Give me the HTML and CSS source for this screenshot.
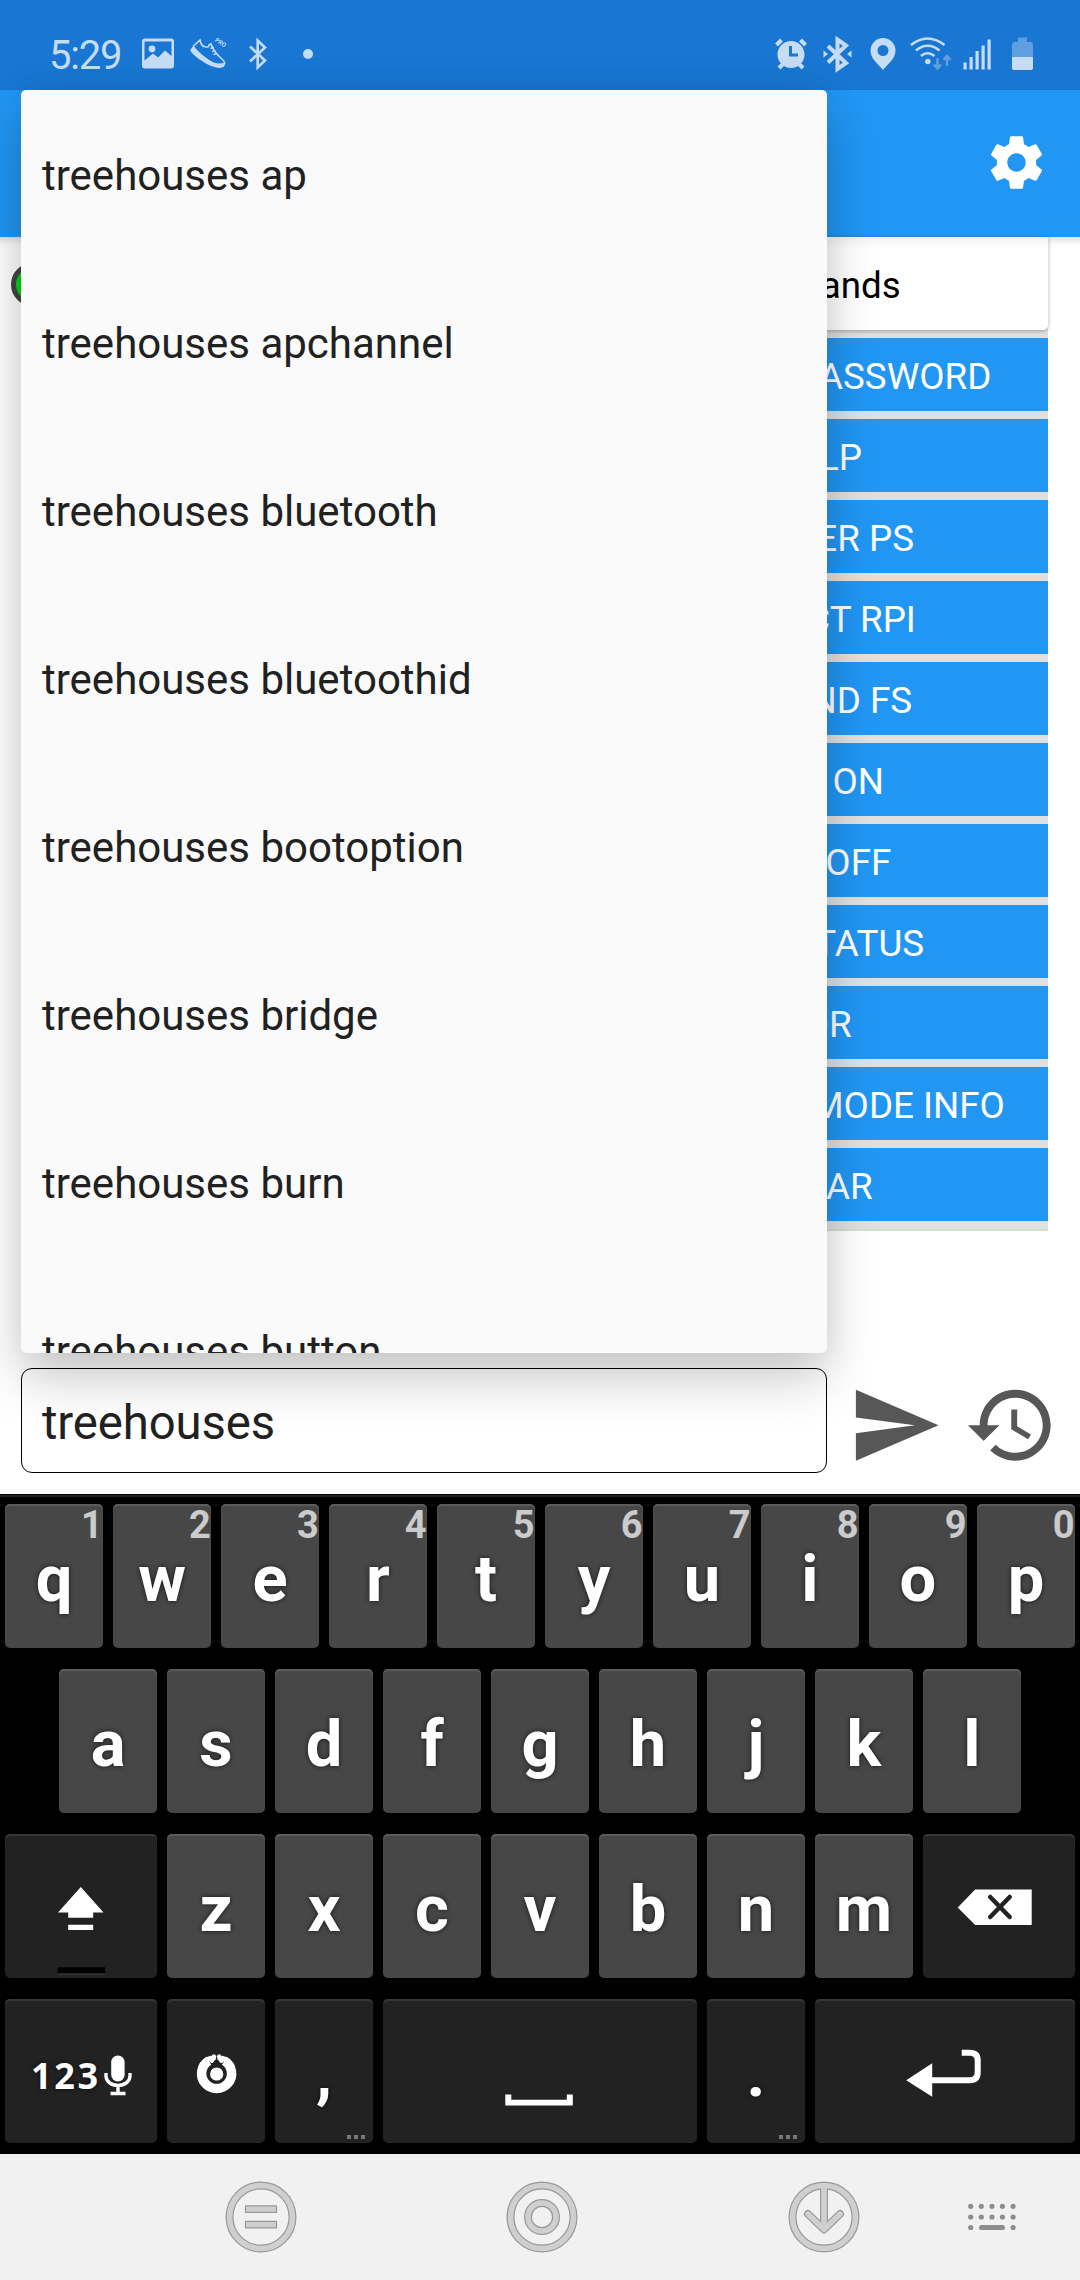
FILE: index.html
```html
<!DOCTYPE html>
<html lang="en">
<head>
<meta charset="utf-8">
<title>Treehouses Remote</title>
<link rel="stylesheet" href="styles.css">
</head>
<body>
<div class="screen">
  <header class="status">
    <span class="clock">5:29</span>
    <svg class="st-image" width="32" height="31" viewBox="142 38 32 31"><path fill-rule="evenodd" d="M145 38.500h26a3 3 0 0 1 3 3v24a3 3 0 0 1-3 3h-26a3 3 0 0 1-3-3v-24a3 3 0 0 1 3-3zM144.500 41.500v19l8.500-7 5 4 7-7 6.500 5.500v-14.500z"/><circle cx="152" cy="48.800" r="3.400"/></svg>
    <svg class="st-shoe" width="36" height="34" viewBox="190 36 36 34"><path d="M190.500 49.500L193.500 45.800C200 54 208 60 215 63Q220 64.200 224.500 62.500Q226 67 221 67.800C213 69 200 60.500 194 55Q190 51.500 190.500 49.500z"/><path class="ln" d="M193 46.500L200 40Q201 46 205 46.800Q209.500 47.500 209 45L211 44C213 50 216 54 222 59Q224.500 61 224.800 64M210.500 48.500l3.500-1M212 51.500l3.500-1M213.500 54.500l3.500-1"/><text x="214.500" y="41" font-size="6" font-weight="700" transform="rotate(33 214.500 41)">PRO</text></svg>
    <svg class="st-bt" width="18" height="32" viewBox="249 38 18 32"><path class="ln3" d="M250 46.500l15 14-7.300 7V40.500l7.300 7-15 14"/></svg>
    <span class="dot"></span>
    <span class="grow"></span>
    <svg class="st-alarm" width="34" height="33" viewBox="774 37 34 33"><path fill-rule="evenodd" d="M791 41a13.400 13.400 0 1 1 0 27a13.400 13.400 0 1 1 0-27zM789 46v10.500h9v-3h-6V46z"/><path class="ln4" d="M776.500 45l5-5M805.500 45l-5-5M783 64l-4 4M799 64l4 4"/></svg>
    <svg class="st-bt2" width="30" height="34" viewBox="823 36.500 30 34"><path class="ln4" d="M828 45.500l18 17-8.500 6V39l8.500 6-18 17"/><path d="M823.500 50l4.500 3.500-4.500 3.500zM851.500 50l-4.500 3.500 4.500 3.500z"/></svg>
    <svg class="st-pin" width="26" height="32" viewBox="869.500 37.500 26 32"><path fill-rule="evenodd" d="M882.500 37.500a12.500 12.500 0 0 1 12.500 12.500c0 8-7 13-12.500 19.500C877 63 870 58 870 50a12.500 12.500 0 0 1 12.500-12.500zM882.500 44.500a5.500 5.500 0 1 0 0 11a5.500 5.500 0 1 0 0-11z"/></svg>
    <svg class="st-wifi" width="42" height="33" viewBox="909.500 37 42 33"><path class="ln3" d="M910.500 45q16.500-13 33.500 0M915.500 50.500q11.500-9.500 23.500 0M920.500 56q6.500-5.500 13.500 0"/><circle cx="927.300" cy="61.500" r="2.700"/><path class="dim" d="M937 58v10M933.500 64.500l3.500 4 3.500-4M946.500 66V56M943 60l3.500-4 3.500 4"/></svg>
    <svg class="st-sig" width="28" height="31" viewBox="962.500 39 28 31"><path d="M963 62.500h3.200V69.500H963zM969 57h3.200v12.500H969zM975 51h3.200v18.500H975zM981 45.500h3.200v24H981zM987 39.500h3.200v30H987z"/></svg>
    <svg class="st-bat" width="21" height="33" viewBox="1012 37 21 33"><path fill="#5f9fe0" d="M1018 37.500h9V42h4.500l1.500 2v13h-21V44l1.500-2h4.500z"/><path d="M1012 57h21v11q0 2-2 2h-17q-2 0-2-2z"/></svg>
  </header>

  <div class="appbar">
    <svg width="63" height="63" viewBox="0 0 24 24"><path fill="#fff" d="M19.430 12.980c.040-.320.070-.640.070-.980s-.030-.660-.070-.980l2.110-1.650c.190-.150.240-.420.120-.640l-2-3.460c-.120-.220-.390-.300-.610-.220l-2.490 1c-.520-.400-1.080-.730-1.690-.980l-.380-2.650C14.460 2.180 14.250 2 14 2h-4c-.250 0-.460.180-.490.420l-.380 2.650c-.610.250-1.170.590-1.690.980l-2.490-1c-.230-.090-.490 0-.610.220l-2 3.460c-.130.220-.070.490.120.640l2.110 1.650c-.040.320-.070.650-.070.980s.030.660.070.980l-2.110 1.650c-.190.150-.240.420-.120.640l2 3.460c.120.220.390.300.610.220l2.490-1c.520.400 1.080.730 1.690.980l.380 2.650c.030.240.240.420.490.420h4c.250 0 .460-.180.490-.420l.380-2.650c.610-.250 1.170-.590 1.690-.980l2.490 1c.230.090.490 0 .610-.220l2-3.460c.120-.220.070-.490-.120-.640l-2.110-1.650zM12 15.500c-1.930 0-3.500-1.570-3.500-3.500s1.570-3.500 3.500-3.500 3.500 1.570 3.500 3.500-1.570 3.500-3.500 3.500z"/></svg>
  </div>

  <main class="content">
    <div class="board">
      <span class="led"></span>
      <section class="commands">
        <h2>Commands</h2>
        <ul>
          <li>CHANGE PASSWORD</li><li>HELP</li><li>DOCKER PS</li><li>DETECT RPI</li><li>EXPAND FS</li><li>VNC ON</li><li>VNC OFF</li><li>VNC STATUS</li><li>TOR</li><li>NETWORK MODE INFO</li><li>CLEAR</li>
        </ul>
      </section>
    </div>
    <div class="compose">
      <div class="field">treehouses</div>
      <svg class="send" width="94.500" height="94.500" viewBox="0 0 24 24"><path d="M2.010 21L23 12 2.010 3 2 10l15 2-15 2z"/></svg>
      <svg class="history" width="94.500" height="94.500" viewBox="0 0 24 24"><path d="M13 3c-4.970 0-9 4.030-9 9H1l3.890 3.890.070.140L9 12H6c0-3.870 3.130-7 7-7s7 3.130 7 7-3.130 7-7 7c-1.930 0-3.680-.790-4.940-2.060l-1.420 1.420C8.270 19.990 10.510 21 13 21c4.970 0 9-4.030 9-9s-4.030-9-9-9zm-1 5v5l4.280 2.540.720-1.210-3.500-2.080V8H12z"/></svg>
    </div>
    <ul class="suggestions">
      <li>treehouses ap</li><li>treehouses apchannel</li><li>treehouses bluetooth</li><li>treehouses bluetoothid</li><li>treehouses bootoption</li><li>treehouses bridge</li><li>treehouses burn</li><li>treehouses button</li>
    </ul>
  </main>

  <div class="keyboard">
    <div class="row">
      <div class="key">q<i>1</i></div><div class="key">w<i>2</i></div><div class="key">e<i>3</i></div><div class="key">r<i>4</i></div><div class="key">t<i>5</i></div><div class="key">y<i>6</i></div><div class="key">u<i>7</i></div><div class="key">i<i>8</i></div><div class="key">o<i>9</i></div><div class="key">p<i>0</i></div>
    </div>
    <div class="row">
      <div class="key">a</div><div class="key">s</div><div class="key">d</div><div class="key">f</div><div class="key">g</div><div class="key">h</div><div class="key">j</div><div class="key">k</div><div class="key">l</div>
    </div>
    <div class="row">
      <div class="key dark wide icon"><svg width="151" height="144" viewBox="5.800 1834 151 144"><path fill="#fff" d="M80.600 1887l22.700 25.500H93v5.200H68v-5.200H57.800zM68 1924.700h25v5.400H68z"/><path d="M57.500 1967.300H105v6.200H57.500z"/><path fill="#3a3a3a" d="M57.500 1973.500H105v1.200H57.500z"/></svg></div>
      <div class="key">z</div><div class="key">x</div><div class="key">c</div><div class="key">v</div><div class="key">b</div><div class="key">n</div><div class="key">m</div>
      <div class="key dark wide icon"><svg width="151" height="144" viewBox="923.300 1834 151 144"><path fill="#fff" d="M958 1907.500l17.500-18H1032v35.500h-56.500z"/><path d="M990.500 1897l19.500 20M1010 1897l-19.500 20" fill="none" stroke="#222" stroke-width="4.500" stroke-linecap="round"/></svg></div>
    </div>
    <div class="row">
      <div class="key dark wide icon num"><span>123</span><svg width="28" height="41" viewBox="104 2055 28 41"><rect x="111.200" y="2055.500" width="13.400" height="26" rx="6.700" fill="#fff"/><path d="M106 2073v3c0 5 5 9.500 12 9.500s12-4.500 12-9.500v-3M118 2085v8M110.500 2093.500h15" fill="none" stroke="#fff" stroke-width="3.400"/></svg></div>
      <div class="key dark icon"><svg width="97" height="144" viewBox="167.700 1999.300 97 144"><path d="M208.500 2061a15 15 0 1 0 15.600 0" fill="none" stroke="#fff" stroke-width="9.500"/><path d="M204 2062l6-3.500M208 2059l5.500-.500M228.600 2062l-6-3.500M224.600 2059l-5.500-.500M211.500 2061l2.200-4M221 2061l-2.200-4" fill="none" stroke="#fff" stroke-width="4.500" stroke-linecap="round"/><circle cx="216.400" cy="2074.300" r="6.600" fill="#fff"/></svg></div>
      <div class="key dark">,<b></b></div>
      <div class="key dark space icon"><svg width="313" height="144" viewBox="383.700 1999.300 313 144"><path d="M506 2094.700h6v5.300h55.500v-5.300h6v11H506z" fill="#fff"/></svg></div>
      <div class="key dark">.<b></b></div>
      <div class="key dark enter icon"><svg width="259" height="144" viewBox="815.300 1999.300 259 144"><path fill="#fff" d="M906.500 2080.500l26-17v33.500z"/><path d="M932 2080.500h38q8 0 8-8v-12q0-7.500-8-7.500h-8" fill="none" stroke="#fff" stroke-width="6"/></svg></div>
    </div>
  </div>

  <nav class="navbar">
    <svg width="74" height="74" viewBox="-37 -37 74 74"><g class="edge"><circle r="31.500"/></g><g class="body"><circle r="31.500"/></g><path d="M-15.500-11.200h31v6.600h-31zM-15.500 4.300h31v6.600h-31z" fill="#cfcfcf" stroke="#999" stroke-width="1.200" stroke-linejoin="round"/></svg>
    <svg width="74" height="74" viewBox="-37 -37 74 74"><g class="edge"><circle r="31.500"/><circle r="14"/></g><g class="body"><circle r="31.500"/><circle r="14"/></g></svg>
    <svg width="74" height="74" viewBox="-37 -37 74 74"><g class="edge"><circle r="31.500"/><path d="M0-31V12M-16-3L0 12.500 16-3"/></g><g class="body"><circle r="31.500"/><path d="M0-31V12M-16-3L0 12.500 16-3"/></g></svg>
    <svg class="ime" width="48" height="28" viewBox="968 2203 48 28"><path d="M970.700 2206.300h0M981.300 2206.300h0M992 2206.300h0M1002.400 2206.300h0M1013.100 2206.300h0M970.700 2217h0M981.300 2217h0M992 2217h0M1002.400 2217h0M1013.100 2217h0M970.700 2227.500h0M981.600 2227.500h20.800M1013.100 2227.500h0" fill="none" stroke="#8d8d8d" stroke-width="5.200" stroke-linecap="round"/></svg>
  </nav>
</div>
</body>
</html>
```
FILE: styles.css
```css
* { box-sizing: border-box; margin: 0; padding: 0; }
body { font-family: Roboto, "Liberation Sans", sans-serif; background: #fff; }
svg { display: block; flex: none; overflow: visible; }
ul { list-style: none; }
.screen { width: 1080px; height: 2280px; display: flex; flex-direction: column; overflow: hidden; }

.status { height: 90px; background: #1976d2; display: flex; align-items: flex-start; flex: none; }
.status svg { fill: #c5dcf4; }
.clock { color: #c5dcf4; font-size: 40px; line-height: 48px; letter-spacing: -1.2px; margin: 32px 0 0 49px; width: 74px; }
.status .ln, .status .ln3, .status .ln4, .status .dim { fill: none; stroke: #c5dcf4; }
.ln { stroke-width: 1.6; }
.ln3 { stroke-width: 2.6; }
.ln4 { stroke-width: 4; }
.status .dim { stroke: #5f9fe0; stroke-width: 2.6; }
.st-image { margin: 38px 0 0 19px; }
.st-shoe { margin: 36px 0 0 16px; }
.st-bt { margin: 38px 0 0 23px; }
.dot { width: 10px; height: 10px; border-radius: 50%; background: #c5dcf4; margin: 49px 0 0 36px; }
.grow { flex: 1; }
.st-alarm { margin-top: 37px; }
.st-bt2 { margin: 36.5px 0 0 15px; }
.st-pin { margin: 37.5px 0 0 16.5px; }
.st-wifi { margin: 37px 0 0 14px; }
.st-sig { margin: 39px 0 0 11px; }
.st-bat { margin: 37px 47px 0 21.5px; }

.appbar { height: 147px; background: #2196f3; display: flex; justify-content: flex-end; align-items: flex-start; padding: 41px 32px 0 0; flex: none; }

.content { height: 1257px; flex: none; position: relative; display: flex; flex-direction: column; box-shadow: inset 0 10px 10px -8px rgba(0,0,0,.18); }
.board { height: 1131px; display: flex; justify-content: space-between; padding: 0 32px 0 11px; }
.led { width: 43px; height: 43px; border-radius: 50%; border: 5px solid #444; background: #00d810; margin-top: 26px; }
.commands { width: 464px; height: 994px; background: #e0e0e0; border-bottom: 2px solid #cfe3cc; }
.commands h2 { height: 93px; line-height: 97px; padding-right: 20px; font-size: 36.75px; font-weight: 400; text-align: center; background: linear-gradient(#f3f3f3, #fff 12px); color: #000; border-radius: 0 0 5px 5px; box-shadow: 0 1px 4px rgba(0,0,0,.3); }
.commands ul { display: grid; gap: 8px; padding-top: 8px; }
.commands li { height: 73px; line-height: 77px; padding-left: 2px; background: #2196f3; color: #fff; text-align: center; font-size: 36.75px; white-space: nowrap; }
.compose { display: flex; align-items: center; height: 105px; padding-left: 21px; }
.field { width: 806px; height: 105px; border: 1px solid #000; border-radius: 11px; padding-left: 20px; font-size: 47.25px; letter-spacing: -.1px; line-height: 109px; color: #212121; }
.compose svg { fill: #575757; margin-top: 9px; }
.send { margin-left: 21px; }
.history { margin-left: 21.7px; }
.suggestions { position: absolute; left: 21px; top: -147px; width: 806px; height: 1263px; overflow: hidden; background: #fafafa; border-radius: 5px; box-shadow: 0 28px 50px rgba(0,0,0,.19), 0 0 40px rgba(0,0,0,.08); }
.suggestions li { height: 168px; line-height: 171px; padding-left: 21px; font-size: 42px; color: #212121; }

.keyboard { height: 660px; background: #000; border-top: 1px solid #000; box-shadow: inset 0 3px 0 -1px #222; flex: none; position: relative; display: flex; flex-direction: column; gap: 21px; padding-top: 9.3px; }
.row { display: flex; justify-content: center; gap: 10.7px; height: 144px; }
.key { width: 97.3px; height: 144px; border-radius: 5px; background: #474747; box-shadow: inset 0 2px 1px #5c5c5c; color: #fff; font-weight: 700; font-size: 65px; line-height: 150px; text-align: center; text-shadow: 0 0 5px rgba(0,0,0,.7); position: relative; flex: none; }
.key i { position: absolute; top: 5px; right: 0; font-style: normal; font-size: 38px; line-height: 32px; color: #cbcbcb; text-shadow: none; }
.dark { background: #222; box-shadow: inset 0 2px 1px #383838; }
.wide { width: 151.3px; }
.space { width: 313.3px; }
.enter { width: 259.3px; }
.icon { display: flex; justify-content: center; overflow: hidden; }
.num { justify-content: flex-start; font-family: "Open Sans", sans-serif; font-size: 36px; letter-spacing: 2.7px; line-height: 154px; padding-left: 22.5px; }
.num span { width: 76px; }
.num svg { margin-top: 55.5px; }
.key b { position: absolute; right: 8px; bottom: 4px; width: 18px; height: 4px; background: repeating-linear-gradient(90deg, #777 0 4px, transparent 4px 7px); }

.navbar { height: 126px; flex: none; background: #f1f1f1; display: flex; align-items: center; gap: 207.5px; padding-left: 223.5px; }
.navbar .ime { margin-left: -100.5px; }
.edge, .body { fill: none; stroke-linecap: round; stroke-linejoin: round; }
.edge { stroke: #999; stroke-width: 8; }
.body { stroke: #cfcfcf; stroke-width: 5.6; }
```
